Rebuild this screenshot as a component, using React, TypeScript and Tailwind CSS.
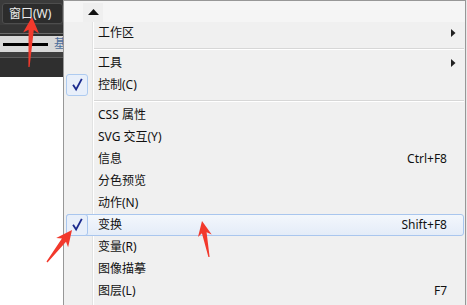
import React from "react";

type Pt = [number, number];

function arrowPoints(tail: Pt, tip: Pt, headLen: number, headHalf: number, neckHalf: number, tailHalf: number): string {
  const dx = tip[0] - tail[0];
  const dy = tip[1] - tail[1];
  const len = Math.hypot(dx, dy);
  const ux = dx / len;
  const uy = dy / len;
  const px = -uy;
  const py = ux;
  const bx = tip[0] - ux * headLen;
  const by = tip[1] - uy * headLen;
  const nx = tip[0] - ux * (headLen - 3);
  const ny = tip[1] - uy * (headLen - 3);
  const pts: Pt[] = [
    tip,
    [bx + px * headHalf, by + py * headHalf],
    [nx + px * neckHalf, ny + py * neckHalf],
    [tail[0] + px * tailHalf, tail[1] + py * tailHalf],
    [tail[0] - px * tailHalf, tail[1] - py * tailHalf],
    [nx - px * neckHalf, ny - py * neckHalf],
    [bx - px * headHalf, by - py * headHalf],
  ];
  return pts.map((p) => `${p[0].toFixed(1)},${p[1].toFixed(1)}`).join(" ");
}

const Check = () => (
  <svg width="22" height="22" viewBox="0 0 22 22">
    <path d="M7.2 11.6 L10 16 L15.8 5.2" fill="none" stroke="#1b2a8e" strokeWidth="2" strokeLinejoin="miter" strokeLinecap="square" />
  </svg>
);

const SubArrow = () => (
  <svg width="5" height="8" viewBox="0 0 5 8" className="block">
    <polygon points="0,0 4.5,4 0,8" fill="#222" />
  </svg>
);

type Item = { label: string; shortcut?: string; sub?: boolean; checked?: boolean; hot?: boolean };

const Row = ({ item }: { item: Item }) => {
  if (item.hot) {
    return (
      <div className="flex h-[22px] ml-[2px] mr-[1px] items-center rounded-[3px] border border-[#a9c6ee] bg-gradient-to-b from-[#f3f7fc] to-[#e4ecf8]">
        <div className="-ml-px -my-px w-[22px] h-[22px] shrink-0 rounded-[3px] border border-[#a9c6ee] bg-[#e8effa] flex items-center justify-center">
          <Check />
        </div>
        <div className="flex-1 flex items-center pl-[10px] pr-[16px]">
          <span className="flex-1">{item.label}</span>
          {item.shortcut && <span>{item.shortcut}</span>}
        </div>
      </div>
    );
  }
  return (
    <div className="flex h-[22px]">
      <div className="w-[29px] shrink-0 border-r border-[#e2e3e3] flex items-center pl-[2px]">
        {item.checked && (
          <div className="w-[22px] h-[22px] rounded-[3px] border border-[#aecbf0] bg-[#e8effa] flex items-center justify-center">
            <Check />
          </div>
        )}
      </div>
      <div className="w-px bg-white shrink-0" />
      <div className="flex-1 flex items-center pl-[4px] pr-[18px]">
        <span className="flex-1">{item.label}</span>
        {item.shortcut && <span>{item.shortcut}</span>}
        {item.sub && (
          <span className="-mr-[9px]">
            <SubArrow />
          </span>
        )}
      </div>
    </div>
  );
};

const Sep = () => (
  <div className="flex h-[8px]">
    <div className="w-[29px] shrink-0 border-r border-[#e2e3e3]" />
    <div className="w-px bg-white shrink-0" />
    <div className="flex-1 pt-[4px] pr-[1px]">
      <div className="h-px bg-[#d7d7d7]" />
      <div className="h-px bg-white" />
    </div>
  </div>
);

export default function App() {
  const group1: Item[] = [{ label: "工作区", sub: true }];
  const group2: Item[] = [
    { label: "工具", sub: true },
    { label: "控制(C)", checked: true },
  ];
  const group3: Item[] = [
    { label: "CSS 属性" },
    { label: "SVG 交互(Y)" },
    { label: "信息", shortcut: "Ctrl+F8" },
    { label: "分色预览" },
    { label: "动作(N)" },
    { label: "变换", shortcut: "Shift+F8", hot: true, checked: true },
    { label: "变量(R)" },
    { label: "图像描摹" },
    { label: "图层(L)", shortcut: "F7" },
  ];

  return (
    <div
      className="relative flex w-[467px] h-[305px] overflow-hidden bg-white text-[12px] leading-none text-[#111]"
      style={{ fontFamily: "'Noto Sans', 'Noto Sans CJK SC', sans-serif" }}
    >
      {/* left app chrome */}
      <div className="w-[63px] shrink-0 flex flex-col">
        <div className="h-[25px] bg-[#3b3b3b] pl-[2px] pt-[3px]">
          <div className="h-[21px] w-[61px] rounded-[3px] border border-[#4d4d4d] bg-[#2c2c2c] flex items-center pl-[6px] text-[#ececec]">
            窗口(W)
          </div>
        </div>
        <div className="h-[8px] bg-[#343434]" />
        <div className="h-px bg-[#6a6a6a]" />
        <div className="h-[2px] bg-[#2e2e2e]" />
        <div className="h-[16px] bg-[#d8d8d8] flex items-center pl-[3px] overflow-hidden">
          <div className="w-[45px] h-[3px] bg-black shrink-0" />
          <span className="ml-[6px] text-[#4d6f9c]">基</span>
        </div>
        <div className="h-[5px] bg-[#3e3e3e]" />
        <div className="h-px bg-[#5c5c5c]" />
        <div className="h-[19px] bg-[#2f2f2f]" />
        <div className="flex-1 bg-white" />
      </div>

      {/* menu */}
      <div className="w-[403px] shrink-0 flex flex-col border-l border-t border-r border-[#979797] bg-[#f0f0f0]">
        <div className="h-[21px] bg-[#f5f5f5] flex pl-[19px] pt-[2px]">
          <div className="w-[20px] h-[19px] bg-[#efefef] flex items-center justify-center">
            <svg width="11" height="7" viewBox="0 0 11 7">
              <polygon points="5.5,0 11,6 0,6" fill="#111" />
            </svg>
          </div>
        </div>
        {group1.map((it) => (
          <Row key={it.label} item={it} />
        ))}
        <Sep />
        {group2.map((it) => (
          <Row key={it.label} item={it} />
        ))}
        <Sep />
        {group3.map((it) => (
          <Row key={it.label} item={it} />
        ))}
        <div className="flex flex-1">
          <div className="w-[29px] shrink-0 border-r border-[#e2e3e3]" />
          <div className="w-px bg-white shrink-0" />
        </div>
      </div>
      <div className="flex-1 bg-[#e8e8e8]" />

      {/* annotation arrows */}
      <svg className="absolute left-0 top-0 pointer-events-none" width="467" height="305" viewBox="0 0 467 305">
        <polygon points={arrowPoints([29, 67], [32, 17], 16, 8, 2.6, 0.6)} fill="#f2392c" />
        <polygon points={arrowPoints([47, 262], [72, 230], 16, 7.5, 2.6, 0.6)} fill="#f2392c" />
        <polygon points={arrowPoints([209, 257], [202, 221], 15, 7, 2.4, 0.6)} fill="#f2392c" />
      </svg>
    </div>
  );
}
